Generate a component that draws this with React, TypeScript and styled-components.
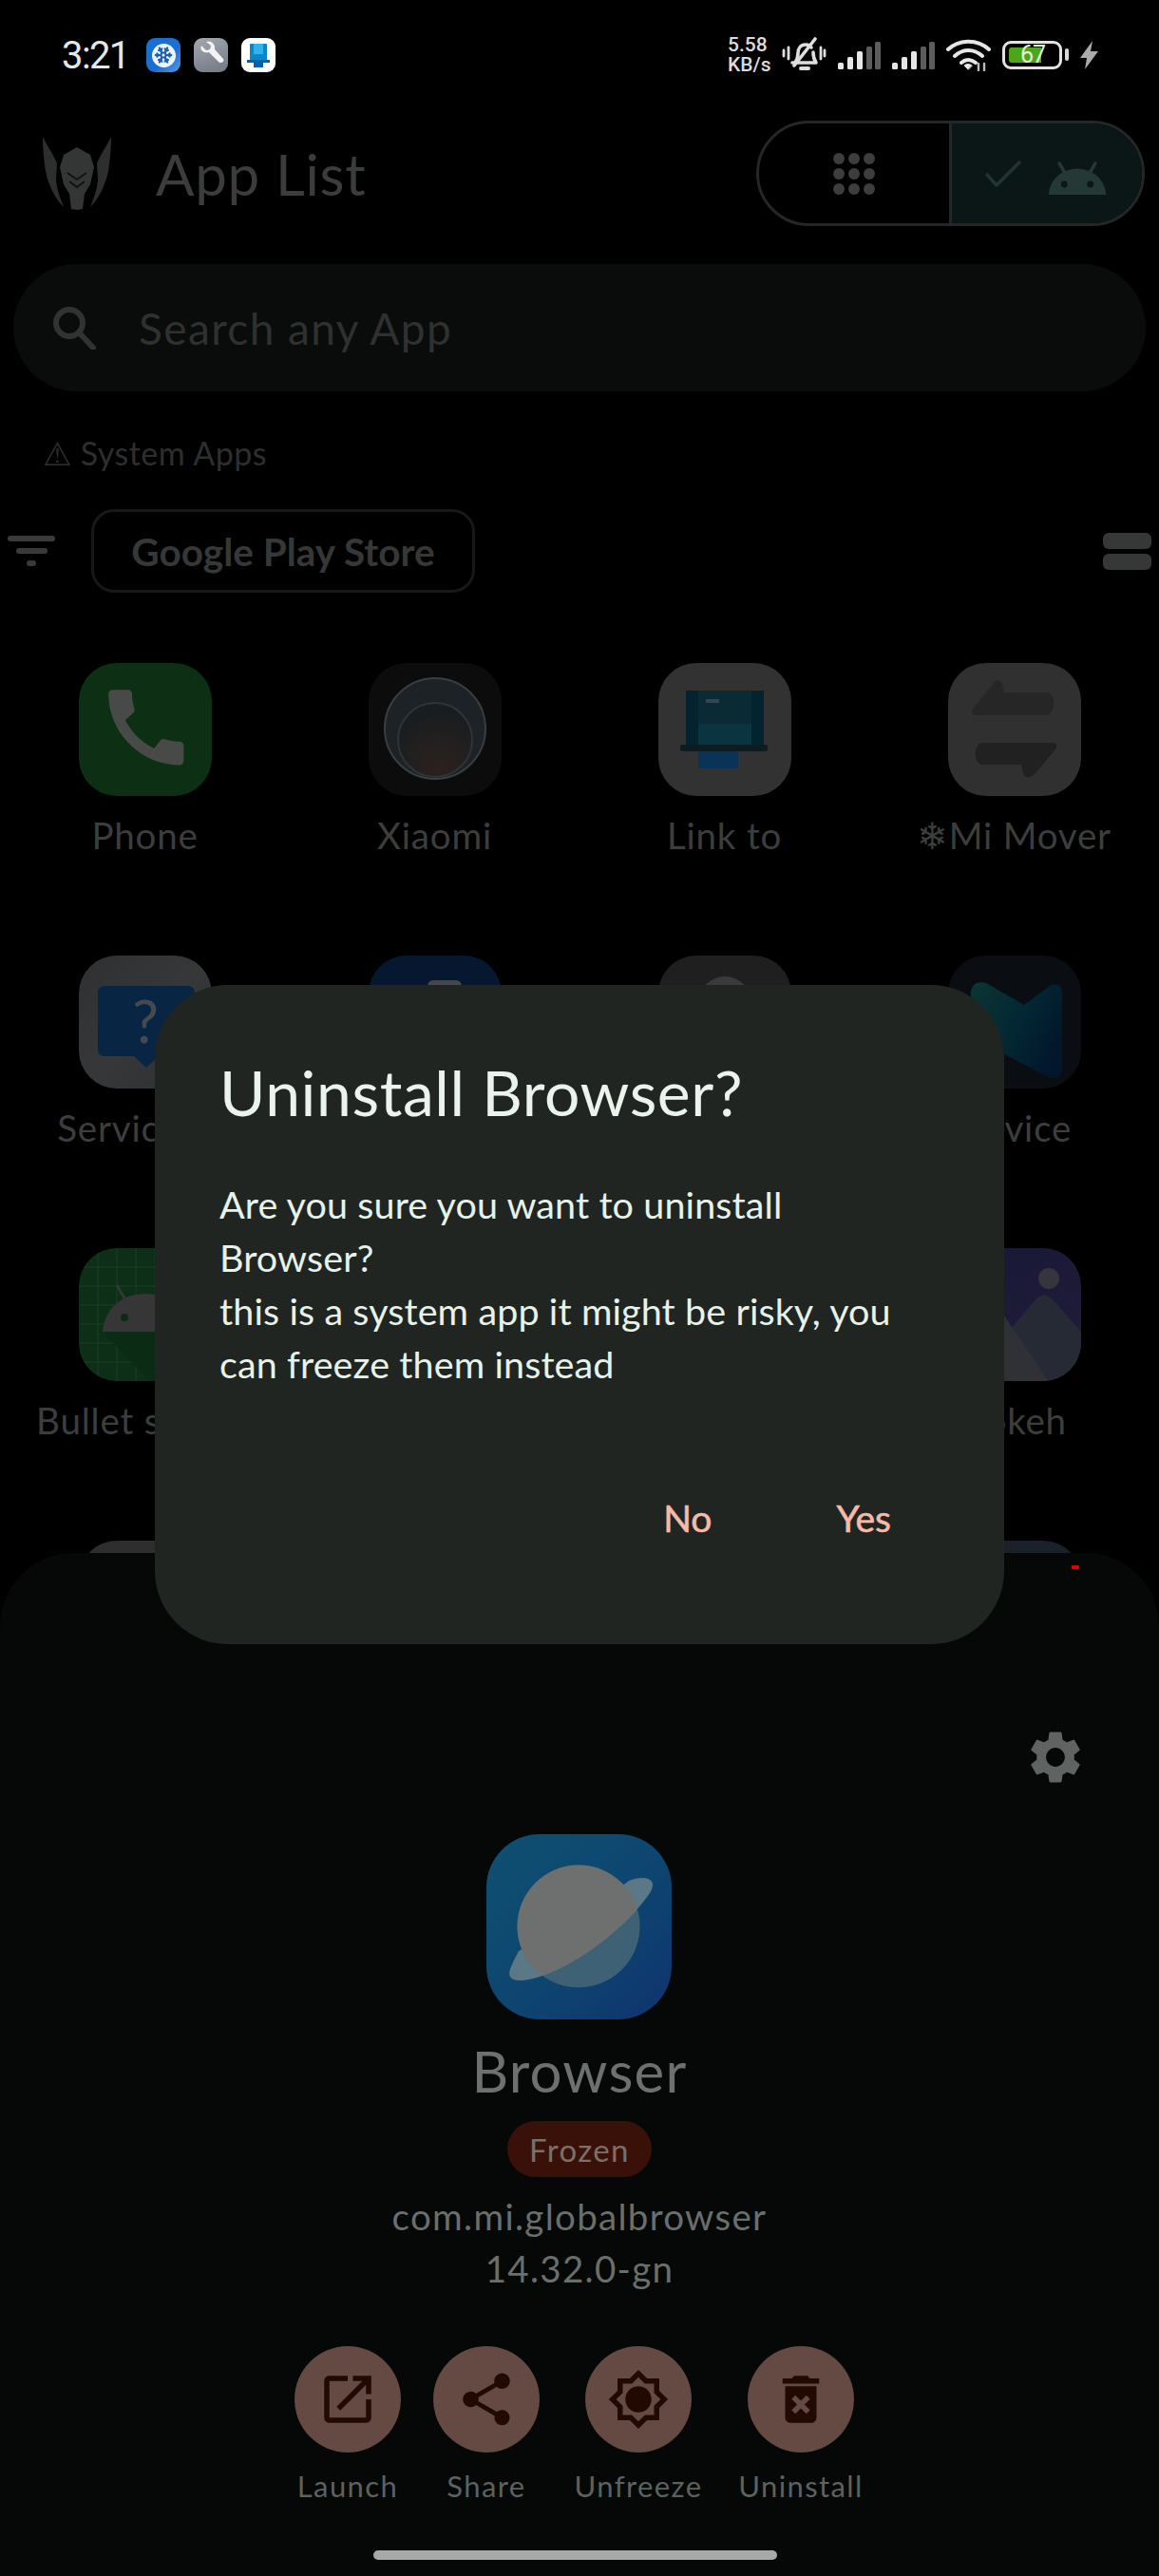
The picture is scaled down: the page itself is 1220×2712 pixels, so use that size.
import React from "react";
import styled, { createGlobalStyle } from "styled-components";
import { Snowflake } from "lucide-react";

const Global = createGlobalStyle`
  html, body { margin: 0; padding: 0; background: #000; }
  * { box-sizing: border-box; }
`;

const FONT = `"Lato", "Noto Sans", sans-serif`;

const Screen = styled.div`
  position: relative;
  width: 1220px;
  height: 2712px;
  overflow: hidden;
  background: #000;
  font-family: ${FONT};
`;

/* ---------- status bar ---------- */
const StatusBar = styled.div`
  height: 116px;
  padding: 0 64px 0 65px;
  display: flex;
  align-items: center;
  justify-content: space-between;
`;
const StatusLeft = styled.div`
  display: flex;
  align-items: center;
`;
const Clock = styled.span`
  font-family: "Roboto", sans-serif;
  font-size: 40px;
  letter-spacing: -1.6px;
  color: #e6e6e6;
  width: 89px;
`;
const Notifs = styled.div`
  display: flex;
  gap: 14px;
`;
const Notif = styled.div<{ $bg: string }>`
  width: 36px;
  height: 36px;
  border-radius: 9px;
  background: ${(p) => p.$bg};
  display: flex;
  align-items: center;
  justify-content: center;
  overflow: hidden;
`;
const SnowDisc = styled.div`
  width: 25px;
  height: 25px;
  border-radius: 50%;
  background: #eef4fb;
  display: flex;
  align-items: center;
  justify-content: center;
  color: #1b5fb5;
`;
const StatusRight = styled.div`
  display: flex;
  align-items: center;
  gap: 12px;
`;
const NetSpeed = styled.div`
  width: 45px;
  font-family: "Roboto", sans-serif;
  font-weight: 500;
  font-size: 21px;
  line-height: 21px;
  color: #dcdcdc;
  white-space: nowrap;
`;
const Battery = styled.div`
  position: relative;
  width: 70px;
  height: 30px;
  display: flex;
`;
const BatteryShell = styled.div`
  width: 63px;
  height: 30px;
  border: 3px solid #e2e2e2;
  border-radius: 9px;
  padding: 4px;
  display: flex;
`;
const BatteryLevel = styled.div`
  width: 34px;
  background: #4ba61b;
  border-radius: 3px 0 0 3px;
`;
const BatteryText = styled.span`
  position: absolute;
  left: 19px;
  top: 0;
  width: 26px;
  text-align: center;
  font-family: "Roboto", sans-serif;
  font-size: 25px;
  line-height: 30px;
  letter-spacing: -1px;
  color: #e3f3d8;
`;
const BatteryNub = styled.div`
  width: 4px;
  height: 13px;
  margin: 8px 0 0 3px;
  border-radius: 2px;
  background: #d8d8d8;
`;

/* ---------- header ---------- */
const Header = styled.div`
  height: 111px;
  margin-top: 11px;
  padding: 0 15px 0 45px;
  display: flex;
  align-items: center;
`;
const HeaderTitle = styled.h1`
  margin: 0 0 0 47px;
  flex: 1;
  font-family: ${FONT};
  font-weight: 400;
  font-size: 60px;
  line-height: 80px;
  letter-spacing: 0.7px;
  color: #3a3d3b;
`;
const Toggle = styled.div`
  width: 409px;
  height: 111px;
  border: 3px solid #232725;
  border-radius: 56px;
  display: flex;
  overflow: hidden;
`;
const ToggleSeg = styled.div<{ $on?: boolean }>`
  flex: 1;
  display: flex;
  align-items: center;
  justify-content: center;
  gap: 26px;
  background: ${(p) => (p.$on ? "#0b1716" : "transparent")};
  border-left: ${(p) => (p.$on ? "3px solid #232725" : "none")};
`;
const Dots = styled.div`
  display: grid;
  grid-template-columns: repeat(3, 12px);
  grid-auto-rows: 12px;
  gap: 4px;
`;
const Dot = styled.span`
  border-radius: 50%;
  background: #3b3e3c;
`;

/* ---------- search + filters ---------- */
const Search = styled.div`
  height: 134px;
  margin: 40px 14px 0;
  padding: 0 0 0 39px;
  border-radius: 67px;
  background: #090c0b;
  display: flex;
  align-items: center;
  gap: 43px;
`;
const SearchText = styled.span`
  font-size: 46px;
  letter-spacing: 1.4px;
  color: #2e312f;
`;
const SectionLabel = styled.div`
  margin: 43px 0 0 45px;
  height: 44px;
  display: flex;
  align-items: center;
  gap: 8px;
  font-size: 34px;
  letter-spacing: 0.5px;
  color: #2d2f2e;
`;
const FilterRow = styled.div`
  height: 88px;
  margin-top: 37px;
  padding: 0 8px;
  display: flex;
  align-items: center;
`;
const Chip = styled.div`
  width: 404px;
  height: 88px;
  margin-left: 38px;
  border: 3px solid #161918;
  border-radius: 24px;
  display: flex;
  align-items: center;
  justify-content: center;
  font-weight: 700;
  font-size: 40.5px;
  color: #353836;
`;
const FilterBars = styled.div`
  width: 50px;
  display: flex;
  flex-direction: column;
  align-items: center;
  gap: 7px;
`;
const FilterBar = styled.span<{ $w: number }>`
  display: block;
  width: ${(p) => p.$w}px;
  height: 6px;
  border-radius: 3px;
  background: #383b39;
`;
const ViewToggle = styled.div`
  margin-left: auto;
  display: flex;
  flex-direction: column;
  gap: 5px;
`;
const ViewBar = styled.span`
  display: block;
  width: 51px;
  height: 17px;
  border-radius: 6px;
  background: #353836;
`;

/* ---------- grid ---------- */
const Grid = styled.div`
  margin-top: 74px;
  display: grid;
  grid-template-columns: repeat(4, 305px);
  row-gap: 102px;
`;
const AppCell = styled.div`
  display: flex;
  flex-direction: column;
  align-items: center;
`;
const AppIcon = styled.div<{ $bg: string }>`
  width: 140px;
  height: 140px;
  border-radius: 40px;
  background: ${(p) => p.$bg};
  overflow: hidden;
`;
const AppLabel = styled.div`
  height: 44px;
  margin: 19px 0 3px;
  font-size: 38.5px;
  line-height: 44px;
  letter-spacing: 0.8px;
  color: #3c3e3d;
  white-space: nowrap;
`;

/* ---------- bottom sheet ---------- */
const Sheet = styled.div`
  position: absolute;
  left: 0;
  right: 0;
  top: 1635px;
  bottom: 0;
  border-radius: 77px 77px 0 0;
  background: #050807;
  display: flex;
  flex-direction: column;
  align-items: center;
`;
const RedMark = styled.span`
  position: absolute;
  left: 1128px;
  top: 13px;
  width: 8px;
  height: 4px;
  border-radius: 1px;
  background: #e00000;
`;
const GearRow = styled.div`
  align-self: stretch;
  margin-top: 182px;
  padding-right: 76px;
  display: flex;
  justify-content: flex-end;
`;
const BrowserIcon = styled.div`
  width: 195px;
  height: 195px;
  margin-top: 48px;
  margin-right: 2px;
  border-radius: 56px;
  overflow: hidden;
  background: linear-gradient(135deg, #0f5070 0%, #0d4570 55%, #10336f 100%);
`;
const AppName = styled.div`
  margin-top: 14px;
  font-size: 60px;
  line-height: 80px;
  letter-spacing: 1.2px;
  color: #6c706e;
`;
const StatusPill = styled.div`
  width: 152px;
  height: 59px;
  margin-top: 13px;
  border-radius: 30px;
  background: #3a1108;
  display: flex;
  align-items: center;
  justify-content: center;
  font-size: 33px;
  letter-spacing: 1.4px;
  color: #7c6f6a;
`;
const PackageInfo = styled.div`
  margin-top: 14px;
  text-align: center;
  font-size: 38.5px;
  line-height: 55px;
  letter-spacing: 1.3px;
  color: #6a6e6c;
`;
const Actions = styled.div`
  margin-top: 54px;
  padding-right: 4px;
  display: flex;
  gap: 34px;
`;
const Action = styled.div<{ $w: number; $lead?: number }>`
  width: ${(p) => p.$w}px;
  margin-left: ${(p) => p.$lead ?? 0}px;
  display: flex;
  flex-direction: column;
  align-items: center;
`;
const ActionCircle = styled.div`
  width: 112px;
  height: 112px;
  border-radius: 50%;
  background: #644a42;
  display: flex;
  align-items: center;
  justify-content: center;
`;
const ActionLabel = styled.div`
  margin-top: 15px;
  font-size: 31px;
  line-height: 40px;
  letter-spacing: 1.4px;
  color: #5d615f;
  white-space: nowrap;
`;
const HomeBar = styled.div`
  position: absolute;
  left: 393px;
  top: 1050px;
  width: 425px;
  height: 10px;
  border-radius: 5px;
  background: #a8a8a8;
`;

/* ---------- dialog ---------- */
const Dialog = styled.div`
  position: absolute;
  left: 163px;
  top: 1037px;
  width: 894px;
  height: 694px;
  padding: 73px 119px 0 68px;
  border-radius: 77px;
  background: #202522;
  display: flex;
  flex-direction: column;
`;
const DialogTitle = styled.h2`
  margin: 0;
  font-family: ${FONT};
  font-weight: 400;
  font-size: 66px;
  line-height: 80px;
  letter-spacing: 0.6px;
  color: #eaf3ec;
  white-space: nowrap;
`;
const DialogBody = styled.p`
  margin: 50px 0 0;
  font-size: 39.5px;
  line-height: 56px;
  letter-spacing: 0.1px;
  color: #e6f2ea;
  white-space: nowrap;
`;
const DialogActions = styled.div`
  margin-top: 106px;
  display: flex;
  justify-content: flex-end;
  gap: 131px;
`;
const DialogButton = styled.span`
  font-size: 39px;
  font-weight: 400;
  line-height: 56px;
  color: #f6baa8;
  -webkit-text-stroke: 0.6px #f6baa8;
`;

/* ---------- drawings ---------- */
const Glyph = ({ d, size, fill }: { d: string; size: number; fill: string }) => (
  <svg width={size} height={size} viewBox="0 0 24 24" fill={fill}>
    <path d={d} />
  </svg>
);

const P = {
  launch:
    "M19 19H5V5h7V3H5c-1.11 0-2 .9-2 2v14c0 1.1.89 2 2 2h14c1.1 0 2-.9 2-2v-7h-2v7zM14 3v2h3.59l-9.83 9.83 1.41 1.41L19 6.41V10h2V3h-7z",
  share:
    "M18 16.08c-.76 0-1.44.3-1.96.77L8.91 12.7c.05-.23.09-.46.09-.7s-.04-.47-.09-.7l7.05-4.11c.54.5 1.25.81 2.04.81 1.66 0 3-1.34 3-3s-1.34-3-3-3-3 1.34-3 3c0 .24.04.47.09.7L8.04 9.81C7.5 9.31 6.79 9 6 9c-1.66 0-3 1.34-3 3s1.34 3 3 3c.79 0 1.5-.31 2.04-.81l7.12 4.16c-.05.21-.08.43-.08.65 0 1.61 1.31 2.92 2.92 2.92 1.61 0 2.92-1.31 2.92-2.92s-1.31-2.92-2.92-2.92z",
  sun: "M20 8.69V4h-4.69L12 .69 8.69 4H4v4.69L.69 12 4 15.31V20h4.69L12 23.31 15.31 20H20v-4.69L23.31 12 20 8.69zm-2 5.79V18h-3.52L12 20.48 9.52 18H6v-3.52L3.52 12 6 9.52V6h3.52L12 3.52 14.48 6H18v3.52L20.48 12 18 14.48zM12 7c-2.76 0-5 2.24-5 5s2.24 5 5 5 5-2.24 5-5-2.24-5-5-5z",
  trash:
    "M6 19c0 1.1.9 2 2 2h8c1.1 0 2-.9 2-2V7H6v12zm2.46-7.12 1.41-1.41L12 12.59l2.12-2.12 1.41 1.41L13.41 14l2.12 2.12-1.41 1.41L12 15.41l-2.12 2.12-1.41-1.41L10.59 14l-2.13-2.12zM15.5 4l-1-1h-5l-1 1H5v2h14V4z",
  gear:
    "M19.14 12.94c.04-.3.06-.61.06-.94 0-.32-.02-.64-.07-.94l2.03-1.58c.18-.14.23-.41.12-.61l-1.92-3.32c-.12-.22-.37-.29-.59-.22l-2.39.96c-.5-.38-1.03-.7-1.62-.94l-.36-2.54c-.04-.24-.24-.41-.48-.41h-3.84c-.24 0-.43.17-.47.41l-.36 2.54c-.59.24-1.13.57-1.62.94l-2.39-.96c-.22-.08-.47 0-.59.22L2.74 8.87c-.12.21-.08.47.12.61l2.03 1.58c-.05.3-.09.63-.09.94s.02.64.07.94l-2.03 1.58c-.18.14-.23.41-.12.61l1.92 3.32c.12.22.37.29.59.22l2.39-.96c.5.38 1.03.7 1.62.94l.36 2.54c.05.24.24.41.48.41h3.84c.24 0 .44-.17.47-.41l.36-2.54c.59-.24 1.13-.56 1.62-.94l2.39.96c.22.08.47 0 .59-.22l1.92-3.32c.12-.22.07-.47-.12-.61l-2.01-1.58zM12 15.6c-1.98 0-3.6-1.62-3.6-3.6s1.62-3.6 3.6-3.6 3.6 1.62 3.6 3.6-1.62 3.6-3.6 3.6z",
  android:
    "M17.6 11.48 19.44 8.3a.63.63 0 0 0-1.09-.63l-1.88 3.24a11.43 11.43 0 0 0-8.94 0L5.65 7.67a.63.63 0 0 0-1.09.63L6.4 11.48A10.81 10.81 0 0 0 1 20h22a10.81 10.81 0 0 0-5.4-8.52zM7 17.25A1.25 1.25 0 1 1 8.25 16 1.25 1.25 0 0 1 7 17.25zm10 0A1.25 1.25 0 1 1 18.25 16 1.25 1.25 0 0 1 17 17.25z",
  phone:
    "M20.01 15.38c-1.23 0-2.42-.2-3.53-.56a.977.977 0 0 0-1.01.24l-1.57 1.97c-2.83-1.35-5.48-3.9-6.89-6.83l1.95-1.66c.27-.28.35-.67.24-1.02-.37-1.11-.56-2.3-.56-3.53 0-.54-.45-.99-.99-.99H4.19C3.65 3 3 3.24 3 3.99 3 13.28 10.73 21 20.01 21c.71 0 .99-.63.99-1.18v-3.45c0-.54-.45-.99-.99-.99z",
};

const Wrench = () => (
  <svg width="30" height="30" viewBox="0 0 30 30">
    <path d="M5 5l5 5 4-1 1-4-5-4c5-2 10 2 9 8l9 10c1 2 0 4-3 4-1 0-2-1-3-2L13 12C7 13 3 10 5 5z" fill="#f2f3f5" />
  </svg>
);
const LinkGlyph = () => (
  <svg width="30" height="30" viewBox="0 0 30 30">
    <rect x="6" y="3" width="18" height="19" rx="1" fill="#0a87c9" />
    <rect x="10" y="3" width="10" height="11" fill="#32b2ea" />
    <rect x="3" y="20" width="24" height="3" fill="#0a60a8" />
    <rect x="10" y="22" width="10" height="6" fill="#0a60a8" />
  </svg>
);
const BellOff = () => (
  <svg width="47" height="38" viewBox="0 0 47 38" fill="none" stroke="#dedede" strokeWidth="3.6" strokeLinecap="round" strokeLinejoin="round">
    <path d="M14 27c2-3 3-5 3-10 0-5 3-9 8-9 3 0 5 1 6 3M33 16c0 5 1 8 3 11H11" />
    <path d="M35 2 13 30" />
    <path d="M20 33h8" strokeWidth="4" />
    <path d="M2 14v6M7 11v12M41 11v12M45 14v6" strokeWidth="2.8" />
  </svg>
);
const Signal = () => (
  <svg width="45" height="29" viewBox="0 0 45 29">
    <rect x="0" y="22" width="6" height="7" rx="1.5" fill="#e6e6e6" />
    <rect x="10" y="16" width="6" height="13" rx="1.5" fill="#e6e6e6" />
    <rect x="20" y="10" width="6" height="19" rx="1.5" fill="#e6e6e6" />
    <rect x="30" y="5" width="6" height="24" rx="1.5" fill="#5c5c5c" />
    <rect x="39" y="0" width="6" height="29" rx="1.5" fill="#5c5c5c" />
  </svg>
);
const Wifi = () => (
  <svg width="47" height="34" viewBox="0 0 47 34" fill="none" stroke="#e6e6e6" strokeWidth="4" strokeLinecap="round">
    <path d="M2 11C14 0 33 0 45 11" />
    <path d="M9 18c9-8 20-8 29 0" />
    <path d="M16 25c5-4 10-4 15 0" />
    <path d="M23 32 19 28c2-2 6-2 8 0z" fill="#e6e6e6" strokeWidth="1" />
    <path d="M34 26v7M40 26v7" stroke="#bbb" strokeWidth="2.4" />
  </svg>
);
const Bolt = () => (
  <svg width="19" height="30" viewBox="0 0 19 30">
    <path d="M13 0 0 18h7l-2 12L19 11h-8z" fill="#aaa" />
  </svg>
);
const Helmet = () => (
  <svg width="72" height="77" viewBox="0 0 72 77">
    <g fill="#2c2f2d">
      <path d="M0 0C6 12 12 20 15 28L14 46C15 56 18 64 22 74 14 66 6 52 3 36 1 24 0 12 0 0Z" />
      <path d="M72 0C66 12 60 20 57 28L58 46C57 56 54 64 50 74 58 66 66 52 69 36 71 24 72 12 72 0Z" />
    </g>
    <path d="M36 11 50 19 54 32 50 50 44 60 42 76 36 77 30 76 28 60 22 50 18 32 22 19Z" fill="#333634" />
    <path d="M26 38 36 45 46 38M28 47 36 53 44 47" fill="none" stroke="#101110" strokeWidth="1.8" />
  </svg>
);
const SearchGlyph = () => (
  <svg width="50" height="46" viewBox="0 0 50 46" fill="none" stroke="#2f3331" strokeWidth="6">
    <circle cx="20" cy="18" r="14" />
    <path d="M31 29l14 15" strokeLinecap="round" />
  </svg>
);
const Check = () => (
  <svg width="38" height="28" viewBox="0 0 38 28" fill="none" stroke="#1f3532" strokeWidth="3.5">
    <path d="M1 14l11 12L37 1" />
  </svg>
);

const IconPhone = () => (
  <svg width="140" height="140" viewBox="0 0 140 140">
    <g transform="translate(18 15) scale(4.4)">
      <path d={P.phone} fill="#474a47" />
    </g>
  </svg>
);
const IconXiaomi = () => (
  <svg width="140" height="140" viewBox="0 0 140 140">
    <defs>
      <radialGradient id="xm" cx="0.55" cy="0.85" r="0.8">
        <stop offset="0" stopColor="#2c211d" />
        <stop offset="1" stopColor="#171d21" />
      </radialGradient>
    </defs>
    <circle cx="70" cy="69" r="53" fill="#1c2226" stroke="#383f43" strokeWidth="2" />
    <circle cx="70" cy="81" r="39" fill="url(#xm)" stroke="#2f3438" strokeWidth="2" />
  </svg>
);
const IconLink = () => (
  <svg width="140" height="140" viewBox="0 0 140 140">
    <rect x="29" y="29" width="82" height="60" fill="#03232f" />
    <rect x="42" y="29" width="56" height="60" fill="#0a2a34" />
    <rect x="42" y="64" width="56" height="25" fill="#0a3440" />
    <rect x="50" y="38" width="14" height="4" fill="#32484f" />
    <rect x="23" y="86" width="92" height="7" rx="2" fill="#0c1c20" />
    <rect x="42" y="93" width="42" height="18" rx="3" fill="#0a3358" />
  </svg>
);
const IconMover = () => (
  <svg width="140" height="140" viewBox="0 0 140 140">
    <path d="M47 22C49 17 56 17 57 22L59 31H103C114 31 114 55 103 55H30C25 55 24 51 26 48Z" fill="#262626" />
    <path d="M37 84H110C115 84 115 88 113 91L90 118C86 122 80 121 79 116L77 107H37C26 107 26 84 37 84Z" fill="#212121" />
  </svg>
);
const IconService = () => (
  <svg width="140" height="140" viewBox="0 0 140 140">
    <path d="M27 32h88c4 0 7 3 7 7v60c0 4-3 7-7 7H84l-13 12-13-12H27c-4 0-7-3-7-7V39c0-4 3-7 7-7z" fill="#082643" />
    <text x="70" y="92" textAnchor="middle" fontFamily="Lato, sans-serif" fontSize="62" fill="#464a4e">?</text>
  </svg>
);
const IconBlue = () => (
  <svg width="140" height="140" viewBox="0 0 140 140">
    <rect x="62" y="26" width="36" height="60" rx="6" fill="#44484d" />
  </svg>
);
const IconGrey = () => (
  <svg width="140" height="140" viewBox="0 0 140 140">
    <circle cx="70" cy="50" r="28" fill="#3a3a3a" />
  </svg>
);
const IconRibbon = () => (
  <svg width="140" height="140" viewBox="0 0 140 140">
    <defs>
      <linearGradient id="rb" x1="0" y1="0" x2="1" y2="0.5">
        <stop offset="0" stopColor="#0b3633" />
        <stop offset="0.6" stopColor="#032733" />
        <stop offset="1" stopColor="#01182c" />
      </linearGradient>
    </defs>
    <path d="M24 40c0-10 8-14 16-11l40 23 27-20c6-4 13-1 13 7v80c0 8-6 12-14 9L36 92c-8-4-12-8-12-14z" fill="url(#rb)" />
  </svg>
);
const IconBullet = () => (
  <svg width="140" height="140" viewBox="0 0 140 140">
    <g stroke="#174025" strokeWidth="1">
      <path d="M20 0v140M40 0v140M60 0v140M80 0v140M100 0v140M120 0v140M0 20h140M0 40h140M0 60h140M0 80h140M0 100h140M0 120h140" />
    </g>
    <path d="M25 88 75 140h65V88z" fill="#0b2b15" />
    <path d="M40 39l10 17" stroke="#363636" strokeWidth="3" />
    <path d="M25 88c2-26 22-40 45-40s43 14 45 40z" fill="#363636" />
    <circle cx="48" cy="73" r="4" fill="#0b2b15" />
    <circle cx="92" cy="73" r="4" fill="#0b2b15" />
  </svg>
);
const IconBokeh = () => (
  <svg width="140" height="140" viewBox="0 0 140 140">
    <circle cx="106" cy="32" r="11" fill="#36343c" />
    <path d="M60 92l32-38c6-6 12-6 18 0l30 34v52H60z" fill="#252a35" />
    <path d="M0 70c8-14 20-22 32-22 6 0 12 4 18 10l56 82H0z" fill="#2f3137" />
  </svg>
);

type Cell = { bg: string; label?: string; art?: React.ReactNode };
const cells: Cell[] = [
  { bg: "#0d2f13", label: "Phone", art: <IconPhone /> },
  { bg: "#0c0c0c", label: "Xiaomi", art: <IconXiaomi /> },
  { bg: "#323232", label: "Link to", art: <IconLink /> },
  { bg: "#303030", label: "❄Mi Mover", art: <IconMover /> },
  { bg: "linear-gradient(135deg,#2f3032,#363739 50%,#2e2f31)", label: "Services &", art: <IconService /> },
  { bg: "#061830", art: <IconBlue /> },
  { bg: "#1f1f1f", art: <IconGrey /> },
  { bg: "#0a0d12", label: "Device", art: <IconRibbon /> },
  { bg: "#0e2f17", label: "Bullet screen", art: <IconBullet /> },
  { bg: "#1c1c1c" },
  { bg: "#1c1c1c" },
  { bg: "linear-gradient(160deg,#181836,#211d3a)", label: "Bokeh", art: <IconBokeh /> },
  { bg: "#2e2e2e" },
  { bg: "#1c1c1c" },
  { bg: "#1c1c1c" },
  { bg: "#1b2128" },
];

const actions = [
  { label: "Launch", d: P.launch, w: 112 },
  { label: "Share", d: P.share, w: 112 },
  { label: "Unfreeze", d: P.sun, w: 132, lead: 4 },
  { label: "Uninstall", d: P.trash, w: 126, lead: 8 },
];

export default function App() {
  return (
    <Screen>
      <Global />
      <StatusBar>
        <StatusLeft>
          <Clock>3:21</Clock>
          <Notifs>
            <Notif $bg="linear-gradient(135deg,#1a6fd0 60%,#4f9be8)">
              <SnowDisc>
                <Snowflake size={20} strokeWidth={2.6} />
              </SnowDisc>
            </Notif>
            <Notif $bg="linear-gradient(160deg,#a4a9b0,#707882)">
              <Wrench />
            </Notif>
            <Notif $bg="#fff">
              <LinkGlyph />
            </Notif>
          </Notifs>
        </StatusLeft>
        <StatusRight>
          <NetSpeed>
            5.58
            <br />
            KB/s
          </NetSpeed>
          <BellOff />
          <Signal />
          <Signal />
          <Wifi />
          <Battery>
            <BatteryShell>
              <BatteryLevel />
            </BatteryShell>
            <BatteryText>67</BatteryText>
            <BatteryNub />
          </Battery>
          <Bolt />
        </StatusRight>
      </StatusBar>

      <Header>
        <Helmet />
        <HeaderTitle>App List</HeaderTitle>
        <Toggle>
          <ToggleSeg>
            <Dots>
              {Array.from({ length: 9 }).map((_, i) => (
                <Dot key={i} />
              ))}
            </Dots>
          </ToggleSeg>
          <ToggleSeg $on>
            <Check />
            <Glyph d={P.android} size={66} fill="#243836" />
          </ToggleSeg>
        </Toggle>
      </Header>

      <Search>
        <SearchGlyph />
        <SearchText>Search any App</SearchText>
      </Search>

      <SectionLabel>⚠ System Apps</SectionLabel>

      <FilterRow>
        <FilterBars>
          <FilterBar $w={50} />
          <FilterBar $w={33} />
          <FilterBar $w={10} />
        </FilterBars>
        <Chip>Google Play Store</Chip>
        <ViewToggle>
          <ViewBar />
          <ViewBar />
        </ViewToggle>
      </FilterRow>

      <Grid>
        {cells.map((c, i) => (
          <AppCell key={i}>
            <AppIcon $bg={c.bg}>{c.art}</AppIcon>
            {c.label && <AppLabel>{c.label}</AppLabel>}
          </AppCell>
        ))}
      </Grid>

      <Sheet>
        <RedMark />
        <GearRow>
          <Glyph d={P.gear} size={66} fill="#5f6361" />
        </GearRow>
        <BrowserIcon>
          <svg width="195" height="195" viewBox="0 0 195 195">
            <defs>
              <clipPath id="planet">
                <circle cx="97" cy="97" r="64.5" />
              </clipPath>
            </defs>
            <circle cx="97" cy="97" r="64.5" fill="#3f6175" />
            <path d="M34 123C28 135 22 145 25 150 28 156 42 155 59 149 100 135 150 95 172 62 178 52 175 47 165 46 160 46 155 47 150 49L97 90Z" fill="#5a7885" />
            <path d="M0 0H195V40L172 62C150 95 100 135 59 149L20 160H0Z" fill="#6d706f" clipPath="url(#planet)" />
          </svg>
        </BrowserIcon>
        <AppName>Browser</AppName>
        <StatusPill>Frozen</StatusPill>
        <PackageInfo>
          com.mi.globalbrowser
          <br />
          14.32.0-gn
        </PackageInfo>
        <Actions>
          {actions.map((a) => (
            <Action key={a.label} $w={a.w} $lead={a.lead}>
              <ActionCircle>
                <Glyph d={a.d} size={66} fill="#210a02" />
              </ActionCircle>
              <ActionLabel>{a.label}</ActionLabel>
            </Action>
          ))}
        </Actions>
        <HomeBar />
      </Sheet>

      <Dialog>
        <DialogTitle>Uninstall Browser?</DialogTitle>
        <DialogBody>
          Are you sure you want to uninstall
          <br />
          Browser?
          <br />
          this is a system app it might be risky, you
          <br />
          can freeze them instead
        </DialogBody>
        <DialogActions>
          <DialogButton>No</DialogButton>
          <DialogButton>Yes</DialogButton>
        </DialogActions>
      </Dialog>
    </Screen>
  );
}
